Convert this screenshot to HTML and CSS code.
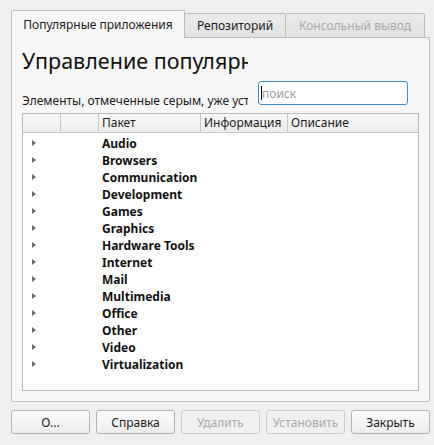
FILE: index.html
```html
<!DOCTYPE html>
<html>
<head>
<meta charset="utf-8">
<link rel="stylesheet" href="styles.css">
</head>
<body>
<div class="window">
  <div class="tabs">
    <div class="tab active">Популярные приложения</div>
    <div class="tab repo">Репозиторий</div>
    <div class="tab console disabled">Консольный вывод</div>
  </div>
  <div class="pane">
    <div class="title">Управление популярн</div>
    <div class="filter-row">
      <div class="hint">Элементы, отмеченные серым, уже установлены</div>
      <div class="search"><span class="caret"></span><span class="placeholder">поиск</span></div>
    </div>
    <div class="tree">
      <div class="header">
        <div class="hcell c1"></div>
        <div class="hcell c2"></div>
        <div class="hcell c3">Пакет</div>
        <div class="hcell c4">Информация</div>
        <div class="hcell c5">Описание</div>
      </div>
      <div class="rows">
        <div class="row"><span class="arrow"></span><span class="name">Audio</span></div>
        <div class="row"><span class="arrow"></span><span class="name">Browsers</span></div>
        <div class="row"><span class="arrow"></span><span class="name">Communication</span></div>
        <div class="row"><span class="arrow"></span><span class="name">Development</span></div>
        <div class="row"><span class="arrow"></span><span class="name">Games</span></div>
        <div class="row"><span class="arrow"></span><span class="name">Graphics</span></div>
        <div class="row"><span class="arrow"></span><span class="name">Hardware Tools</span></div>
        <div class="row"><span class="arrow"></span><span class="name">Internet</span></div>
        <div class="row"><span class="arrow"></span><span class="name">Mail</span></div>
        <div class="row"><span class="arrow"></span><span class="name">Multimedia</span></div>
        <div class="row"><span class="arrow"></span><span class="name">Office</span></div>
        <div class="row"><span class="arrow"></span><span class="name">Other</span></div>
        <div class="row"><span class="arrow"></span><span class="name">Video</span></div>
        <div class="row"><span class="arrow"></span><span class="name">Virtualization</span></div>
      </div>
    </div>
  </div>
  <div class="buttons">
    <div class="btn">О...</div>
    <div class="btn">Справка</div>
    <div class="btn disabled">Удалить</div>
    <div class="btn disabled">Установить</div>
    <div class="btn">Закрыть</div>
  </div>
</div>
</body>
</html>
```

FILE: styles.css
```css
html, body {
  margin: 0;
  padding: 0;
  background: #efefef;
  font-family: "Noto Sans", "DejaVu Sans", sans-serif;
  font-size: 12px;
  color: #1a1a1a;
}
.window {
  width: 434px;
  height: 445px;
  box-sizing: border-box;
  padding: 11px 4px 0 11px;
  display: flex;
  flex-direction: column;
}
.tabs {
  display: flex;
  align-items: flex-end;
  height: 27px;
  position: relative;
  z-index: 1;
  margin-bottom: -1px;
}
.tab {
  box-sizing: border-box;
  border: 1px solid #bcbcbc;
  border-bottom: none;
  border-radius: 2px 2px 0 0;
  display: flex;
  align-items: center;
  justify-content: center;
  white-space: nowrap;
}
.tab.active {
  width: 174px;
  height: 28px;
  background: #f7f7f7;
  padding-bottom: 1px;
}
.tab.repo {
  width: 101px;
  height: 25px;
  background: linear-gradient(#ebebeb, #e2e2e2);
  border-left: none;
  border-bottom: 1px solid #bcbcbc;
}
.tab.console {
  width: 139px;
  height: 25px;
  background: linear-gradient(#ebebeb, #e2e2e2);
  border-left: none;
  border-bottom: 1px solid #bcbcbc;
  color: #a9a9a9;
}
.pane {
  width: 419px;
  height: 365px;
  box-sizing: border-box;
  border: 1px solid #bcbcbc;
  border-radius: 0 2px 2px 2px;
  background: #f7f7f7;
  padding: 9px 10px 10px 10px;
  display: flex;
  flex-direction: column;
}
.title {
  font-size: 21.5px;
  line-height: 28px;
  width: 226px;
  white-space: nowrap;
  overflow: hidden;
  color: #111;
}
.filter-row {
  display: flex;
  align-items: flex-end;
  margin-top: 6px;
  height: 24px;
}
.hint {
  width: 226px;
  white-space: nowrap;
  overflow: hidden;
  line-height: 17px;
  margin-bottom: -4px;
  margin-right: 10px;
}
.search {
  width: 150px;
  height: 24px;
  box-sizing: border-box;
  border: 1px solid #3d8bc9;
  border-radius: 3px;
  background: #fff;
  display: flex;
  align-items: center;
  padding-left: 2px;
}
.caret {
  width: 1px;
  height: 14px;
  background: #000;
}
.placeholder {
  color: #9a9a9a;
}
.tree {
  margin-top: 8px;
  flex: 1;
  border: 1px solid #b9b9b9;
  background: #fff;
  display: flex;
  flex-direction: column;
}
.header {
  display: flex;
  height: 18px;
  border-bottom: 1px solid #c6c6c6;
  background: linear-gradient(#f8f8f8, #ececec);
}
.hcell {
  box-sizing: border-box;
  border-right: 1px solid #c6c6c6;
  line-height: 18px;
  padding-left: 3px;
  white-space: nowrap;
}
.c1 { width: 38px; }
.c2 { width: 38px; }
.c3 { width: 102px; }
.c4 { width: 87px; }
.c5 { flex: 1; border-right: none; }
.rows {
  padding-top: 2px;
}
.row {
  height: 17px;
  display: flex;
  align-items: center;
  position: relative;
}
.arrow {
  position: absolute;
  left: 9px;
  top: 5px;
  width: 0;
  height: 0;
  border-top: 3.5px solid transparent;
  border-bottom: 3.5px solid transparent;
  border-left: 4px solid #6a6a6a;
}
.name {
  margin-left: 79px;
  font-weight: bold;
  color: #111;
}
.buttons {
  display: flex;
  gap: 6px;
  margin-top: 8px;
}
.btn {
  width: 79px;
  height: 24px;
  box-sizing: border-box;
  border: 1px solid #b3b3b3;
  border-radius: 3px;
  background: linear-gradient(#fbfbfb, #ececec);
  display: flex;
  align-items: center;
  justify-content: center;
}
.btn.disabled {
  color: #aaaaaa;
  border-color: #cdcdcd;
  background: #f0f0f0;
}
```
